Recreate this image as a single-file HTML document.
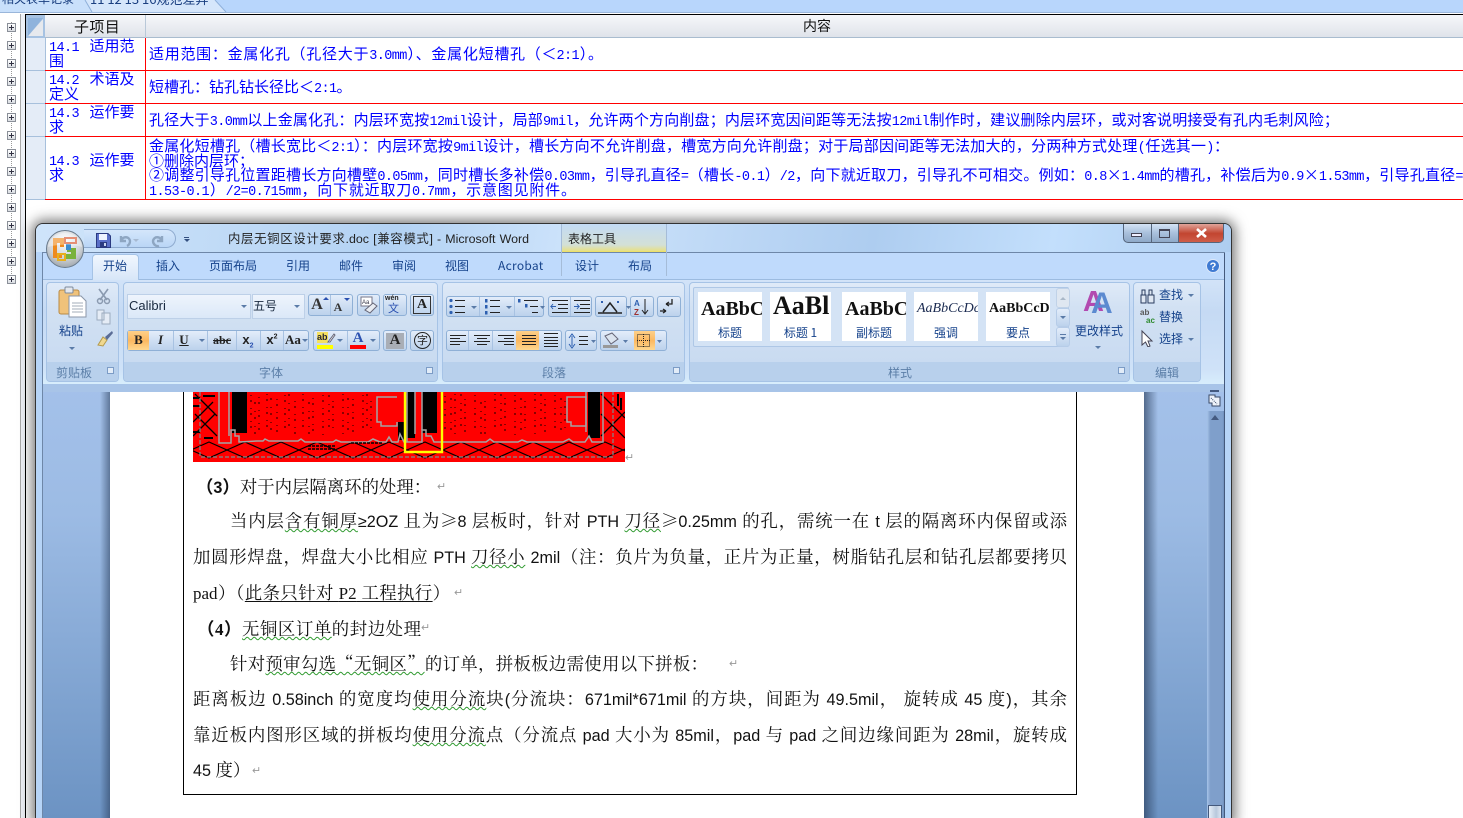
<!DOCTYPE html>
<html lang="zh-CN"><head><meta charset="utf-8"><title>内层无铜区设计要求</title>
<style>
html,body{margin:0;padding:0;background:#fff;width:1463px;height:818px;overflow:hidden}
body{font-family:"Liberation Sans","Noto Sans CJK SC",sans-serif}
#root{position:absolute;left:0;top:0;width:1463px;height:818px;overflow:hidden;background:#fff}
div,span.a,svg.a{position:absolute}
i{font-style:normal}
.tb{position:absolute;height:15px;white-space:nowrap;color:#00f;font:15px/15px "WenQuanYi Zen Hei","Noto Sans CJK SC",sans-serif;text-align:justify;text-align-last:justify}
.tb i{font:13.5px/15px "Liberation Mono",monospace;letter-spacing:-.6px}
.tb u{text-decoration:none;margin-left:3px}
.rl{position:absolute;left:45px;width:1418px;height:1px;background:#f00}
.hl{position:absolute;left:26px;width:19px;height:1px;background:#a7c0dc}
.tree{position:absolute;left:7px;width:9px;height:9px;box-sizing:border-box;border:1px solid #8a8f98;background:linear-gradient(#fff,#d9dde2)}
.tree:before{content:"";position:absolute;left:1px;top:3px;width:5px;height:1px;background:#334}
.tree:after{content:"";position:absolute;left:3px;top:1px;width:1px;height:5px;background:#334}
.rb{position:absolute;font:12px/16px "Noto Sans CJK SC",sans-serif;color:#15428b;white-space:nowrap}
.gr{position:absolute;top:282px;height:100px;box-sizing:border-box;border:1px solid #a6c3e6;border-radius:4px;background:linear-gradient(#dfeaf8 0,#d2e1f3 25%,#c9dbf1 80%);overflow:hidden}
.gr:after{content:"";position:absolute;left:0;right:0;bottom:0;height:19px;background:#b8d0ec}
.lb{position:absolute;top:364px;font:12px/17px "Noto Sans CJK SC",sans-serif;color:#5c7fa8;white-space:nowrap}
.btn{position:absolute;box-sizing:border-box;border:1px solid #8fb0d6;border-radius:3px;background:linear-gradient(#e3edfa,#cfdff3 50%,#bcd2ec)}
.on{position:absolute;background:linear-gradient(#fdd08a,#fbb860 50%,#ffd88f)}
.sep{position:absolute;width:1px;background:#a8c2e2}
.dn{position:absolute;width:0;height:0;border-left:3px solid transparent;border-right:3px solid transparent;border-top:3px solid #5a7ba8}
.sw{position:absolute;top:292px;height:49px;background:#fff;overflow:hidden}
.sw b{position:absolute;left:3px;top:4px;white-space:nowrap;font:bold 20px/26px "Liberation Serif",serif;color:#111}
.sw span{position:absolute;left:0;right:0;top:33px;text-align:center;font:12px/16px "Noto Sans CJK SC",sans-serif;color:#15428b}
.ic{position:absolute;font-family:"Liberation Serif",serif;color:#222;text-align:center;line-height:20px}
.dlg{position:absolute;width:7px;height:7px;box-sizing:border-box;border:1px solid #7c9cc6;background:#e2ecf8}
.d{position:absolute;white-space:nowrap;color:#111;font:17.4px/20px "Noto Serif CJK SC","Noto Sans CJK SC",serif;text-align:justify;text-align-last:justify}
.d b{font-family:"Noto Sans CJK SC",sans-serif;font-weight:700}
.d i{font:16.2px/20px "Liberation Sans",sans-serif}
.d em{font:17px/20px "Liberation Serif",serif;font-style:normal}
.w{text-decoration:underline wavy #2f9a2f 1px;text-underline-offset:1px}
.p{color:#999;font:11px/20px "Liberation Sans",sans-serif;position:absolute}
</style></head><body><div id="root">

<!-- top tab strip -->
<div style="left:0;top:0;width:1463px;height:12px;background:#b8d6fc"></div>
<div style="left:0;top:12px;width:1463px;height:1px;background:#9ab6da"></div>
<svg class="a" style="left:0;top:0" width="240" height="13"><path d="M0 12H92L85 0H0Z" fill="#c9e0fb"/><path d="M85 0L92 12H226L215 0Z" fill="#d5e6fb"/><path d="M85 0L92 12M215 0L226 12" stroke="#8fb0da" fill="none"/></svg>
<div style="left:2px;top:-8px;font:12px/14px 'Noto Sans CJK SC',sans-serif;color:#1a3f80;white-space:nowrap">相关表单记录</div>
<div style="left:90px;top:-8px;font:13px/14px 'Noto Sans CJK SC',sans-serif;color:#1a3f80;white-space:nowrap">11 12 13 16规范差异</div>

<!-- left panel -->
<div style="left:20px;top:14px;width:1px;height:804px;background:#a9a9a9"></div>
<div style="left:21px;top:14px;width:4px;height:804px;background:#eef1f6"></div>
<div style="left:11px;top:22px;width:0;height:258px;border-left:1px dotted #999"></div>
<div class="tree" style="top:23px"></div><div class="tree" style="top:41px"></div><div class="tree" style="top:59px"></div><div class="tree" style="top:77px"></div><div class="tree" style="top:95px"></div><div class="tree" style="top:113px"></div><div class="tree" style="top:131px"></div><div class="tree" style="top:149px"></div><div class="tree" style="top:167px"></div><div class="tree" style="top:185px"></div><div class="tree" style="top:203px"></div><div class="tree" style="top:221px"></div><div class="tree" style="top:239px"></div><div class="tree" style="top:257px"></div><div class="tree" style="top:275px"></div>

<!-- datasheet -->
<div style="left:25px;top:14px;width:1438px;height:1px;background:#000"></div>
<div style="left:25px;top:14px;width:1px;height:804px;background:#000"></div>
<div style="left:26px;top:15px;width:1437px;height:22px;background:linear-gradient(#f6f7fa,#dfe3ea)"></div>
<div style="left:26px;top:37px;width:1437px;height:1px;background:#a9bccf"></div>
<div style="left:26px;top:15px;width:19px;height:23px;background:#a6c2e2"></div>
<svg class="a" style="left:27px;top:17px" width="17" height="20"><path d="M1 19L16 2V19Z" fill="#e6e9ee"/><path d="M1 1H16L1 19Z" fill="#8fb3dc"/></svg>
<div style="left:145px;top:15px;width:1px;height:185px;background:#f00"></div>
<div style="left:145px;top:15px;width:1px;height:23px;background:#b9c8d8"></div>
<div style="left:26px;top:38px;width:19px;height:162px;background:#e4ecf7"></div>
<div style="left:45px;top:38px;width:1px;height:162px;background:#a7c0dc"></div>
<div class="hl" style="top:70px"></div><div class="hl" style="top:103px"></div><div class="hl" style="top:136px"></div><div class="hl" style="top:199px"></div>
<div class="rl" style="top:70px"></div><div class="rl" style="top:103px"></div><div class="rl" style="top:136px"></div><div class="rl" style="top:199px"></div>
<div style="left:74px;top:17px;font:15px/19px 'WenQuanYi Zen Hei','Noto Sans CJK SC',sans-serif;color:#111;letter-spacing:.4px;white-space:nowrap">子项目</div>
<div style="left:803px;top:17px;font:14px/19px 'WenQuanYi Zen Hei','Noto Sans CJK SC',sans-serif;color:#111;white-space:nowrap">内容</div>

<div class="tb" style="left:49px;top:38px"><i>14.1 </i><u>适用范</u></div><div class="tb" style="left:49px;top:53px">围</div>
<div class="tb" style="left:49px;top:71px"><i>14.2 </i><u>术语及</u></div><div class="tb" style="left:49px;top:86px">定义</div>
<div class="tb" style="left:49px;top:104px"><i>14.3 </i><u>运作要</u></div><div class="tb" style="left:49px;top:119px">求</div>
<div class="tb" style="left:49px;top:152px"><i>14.3 </i><u>运作要</u></div><div class="tb" style="left:49px;top:167px">求</div>

<div class="tb" style="left:149px;top:46px;width:454px">适用范围：金属化孔（孔径大于<i>3.0mm</i>）、金属化短槽孔（＜<i>2:1</i>）。</div>
<div class="tb" style="left:149px;top:79px;width:200px">短槽孔：钻孔钻长径比＜<i>2:1</i>。</div>
<div class="tb" style="left:149px;top:112px;width:1190px">孔径大于<i>3.0mm</i>以上金属化孔：内层环宽按<i>12mil</i>设计，局部<i>9mil</i>，允许两个方向削盘；内层环宽因间距等无法按<i>12mil</i>制作时，建议删除内层环，或对客说明接受有孔内毛刺风险；</div>
<div class="tb" style="left:149px;top:138px;width:1080px">金属化短槽孔（槽长宽比＜<i>2:1</i>）：内层环宽按<i>9mil</i>设计，槽长方向不允许削盘，槽宽方向允许削盘；对于局部因间距等无法加大的，分两种方式处理<i>(</i>任选其一<i>)</i>：</div>
<div class="tb" style="left:149px;top:153px">①删除内层环；</div>
<div class="tb" style="left:149px;top:167px;width:1314px">②调整引导孔位置距槽长方向槽壁<i>0.05mm</i>，同时槽长多补偿<i>0.03mm</i>，引导孔直径<i>=</i>（槽长<i>-0.1</i>）<i>/2</i>，向下就近取刀，引导孔不可相交。例如：<i>0.8</i>×<i>1.4mm</i>的槽孔，补偿后为<i>0.9</i>×<i>1.53mm</i>，引导孔直径<i>=</i></div>
<div class="tb" style="left:149px;top:182px;width:427px"><i>1.53-0.1</i>）<i>/2=0.715mm</i>，向下就近取刀<i>0.7mm</i>，示意图见附件。</div>

<!-- Word window -->
<div style="left:35px;top:223px;width:1197px;height:600px;border-radius:8px 8px 0 0;background:#b9d7f8;border:1px solid #333;box-sizing:border-box;box-shadow:0 0 13px 3px rgba(0,0,0,.55)"></div>
<div style="left:36px;top:224px;width:1195px;height:28px;border-radius:7px 7px 0 0;background:linear-gradient(100deg,#cfe4fa 0,#b3d2f3 30%,#cde3fb 45%,#aecdf0 70%,#c3dffc 85%,#aecdf0)"></div>
<div style="left:36px;top:252px;width:6px;height:566px;background:#b6d4f7"></div>
<div style="left:1225px;top:252px;width:6px;height:566px;background:#b6d4f7"></div>
<div style="left:1224px;top:252px;width:1px;height:566px;background:#44597c"></div>
<div style="left:42px;top:252px;width:1px;height:566px;background:#6e87a8"></div>
<div style="left:42px;top:252px;width:1183px;height:1px;background:#6e87a8"></div>

<!-- doc area -->
<div style="left:43px;top:384px;width:1181px;height:434px;background:linear-gradient(#a4c1ea,#9cbbe4 30%,#6c93c3)"></div>
<div style="left:100px;top:392px;width:10px;height:426px;background:linear-gradient(90deg,transparent,rgba(40,60,90,.55))"></div>
<div style="left:110px;top:392px;width:1034px;height:426px;background:#fff"></div>
<div style="left:1144px;top:392px;width:14px;height:426px;background:linear-gradient(90deg,rgba(40,60,90,.65),transparent)"></div>

<!-- ribbon -->
<div style="left:43px;top:253px;width:1181px;height:27px;background:#bfdafc"></div>
<div style="left:43px;top:279px;width:1181px;height:106px;background:linear-gradient(#d2e3f8,#c5daf4 30%,#cfe2f8 85%,#d8eefc);border-top:1px solid #9cbbe0;box-sizing:border-box"></div>
<div style="left:43px;top:384px;width:1181px;height:8px;background:#a8c4e8"></div>

<!-- contextual tab -->
<div style="left:561px;top:224px;width:106px;height:28px;background:linear-gradient(#c3dbf5,#d3e0d6 75%,#e6e08a 95%,#efe05a)"></div>
<div style="left:561px;top:224px;width:1px;height:52px;background:#a5bcd8"></div>
<div style="left:666px;top:224px;width:1px;height:52px;background:#a5bcd8"></div>
<div style="left:568px;top:231px;font:12px/16px 'Noto Sans CJK SC',sans-serif;color:#222;white-space:nowrap">表格工具</div>
<div style="left:228px;top:231px;font:12.4px/16px 'Liberation Sans','Noto Sans CJK SC',sans-serif;color:#222;white-space:nowrap;width:301px;text-align:justify;text-align-last:justify">内层无铜区设计要求.doc [兼容模式] - Microsoft Word</div>

<!-- QAT -->
<div style="left:84px;top:229px;width:92px;height:19px;box-sizing:border-box;border:1px solid #8fabcf;border-left:none;border-radius:0 10px 10px 0;background:linear-gradient(#d4e6fb,#bad6f6)"></div>
<svg class="a" style="left:96px;top:233px" width="15" height="15"><path d="M.5.5H12L14.5 3V14.5H.5Z" fill="#5a6fc8" stroke="#2b3a80"/><rect x="3" y="1" width="8" height="6" fill="#eef3ff"/><rect x="4" y="9" width="7" height="5" fill="#2b3a80"/><rect x="8" y="10" width="2" height="3" fill="#c9d4ef"/></svg>
<svg class="a" style="left:118px;top:233px" width="52" height="15"><path d="M3 3V8H8M3 8C5 3 11 3 12 8C12 10 11 12 9 13" fill="none" stroke="#8ea6c2" stroke-width="2.4"/><path d="M15 6L21 6L18 9Z" fill="#a7bad2"/><path d="M44 3V8H39M44 8C42 3 36 3 35 8C35 11 38 14 41 13" fill="none" stroke="#8ea6c2" stroke-width="2.4"/></svg>
<div style="left:184px;top:237px;width:5px;height:1px;background:#334f80"></div><div class="dn" style="left:184px;top:239px;border-top-color:#334f80"></div>

<!-- Office orb -->
<svg class="a" style="left:45px;top:229px" width="40" height="40"><defs><radialGradient id="o" cx=".5" cy=".3" r=".8"><stop offset="0" stop-color="#fbfcfd"/><stop offset=".55" stop-color="#d0d4d8"/><stop offset="1" stop-color="#8f979e"/></radialGradient></defs><circle cx="20" cy="20" r="18.5" fill="url(#o)" stroke="#6a7b8c"/><path d="M8 9H19V18H15V14H12V25H17V29H8Z" fill="#ee8a1e"/><path d="M20 9H31V14H20Z" fill="none" stroke="#d8542c" stroke-width="2"/><path d="M22 19H31V30H20V25H26V23H22Z" fill="#7ab23a"/><path d="M13 25H20V31H13Z" fill="none" stroke="#e8b01c" stroke-width="2"/><rect x="21" y="15" width="5" height="6" fill="#3a8cd0"/><path d="M3 18A17 14 0 0 1 37 18C28 15 12 15 3 18Z" fill="#fff" opacity=".35"/></svg>

<!-- window buttons -->
<div style="left:1123px;top:224px;width:101px;height:19px;box-sizing:border-box;border:1px solid #55657c;border-top:none;border-radius:0 0 5px 5px;background:linear-gradient(#d4e3f5,#a9c0dc 50%,#8ea9c8);overflow:hidden">
<div style="left:54px;top:0;width:47px;height:19px;background:linear-gradient(#e0a49a,#c24530 50%,#d0604c)"></div>
<div style="left:27px;top:0;width:1px;height:19px;background:#55657c"></div><div style="left:54px;top:0;width:1px;height:19px;background:#55657c"></div></div>
<div style="left:1131px;top:233px;width:11px;height:4px;box-sizing:border-box;border:1px solid #445;background:#eef"></div>
<div style="left:1159px;top:229px;width:11px;height:9px;box-sizing:border-box;border:1px solid #445;border-top-width:2px"></div>
<svg class="a" style="left:1196px;top:228px" width="11" height="10"><path d="M1 1L10 9M10 1L1 9" stroke="#fff" stroke-width="2.6"/></svg>

<!-- tabs -->
<div style="left:92px;top:254px;width:47px;height:26px;box-sizing:border-box;border:1px solid #a5c3e6;border-bottom:none;border-radius:4px 4px 0 0;background:linear-gradient(#f1f7fe,#d7e6f8)"></div>
<div class="rb" style="left:103px;top:258px">开始</div><div class="rb" style="left:156px;top:258px">插入</div><div class="rb" style="left:209px;top:258px">页面布局</div><div class="rb" style="left:286px;top:258px">引用</div><div class="rb" style="left:339px;top:258px">邮件</div><div class="rb" style="left:392px;top:258px">审阅</div><div class="rb" style="left:445px;top:258px">视图</div><div class="rb" style="left:498px;top:258px;letter-spacing:.3px">Acrobat</div><div class="rb" style="left:575px;top:258px">设计</div><div class="rb" style="left:628px;top:258px">布局</div>
<svg class="a" style="left:1206px;top:259px" width="14" height="14"><circle cx="7" cy="7" r="6.5" fill="#3f7ad2" stroke="#dde8f8"/><text x="7" y="11" font-family="Liberation Sans" font-weight="bold" font-size="11" fill="#fff" text-anchor="middle">?</text></svg>

<!-- groups -->
<div class="gr" style="left:46px;width:73px"></div><div class="gr" style="left:123px;width:315px"></div><div class="gr" style="left:442px;width:243px"></div><div class="gr" style="left:689px;width:441px"></div><div class="gr" style="left:1133px;width:68px"></div>
<div class="lb" style="left:56px">剪贴板</div><div class="lb" style="left:259px">字体</div><div class="lb" style="left:542px">段落</div><div class="lb" style="left:888px">样式</div><div class="lb" style="left:1155px">编辑</div>
<div class="dlg" style="left:107px;top:367px"></div><div class="dlg" style="left:426px;top:367px"></div><div class="dlg" style="left:673px;top:367px"></div><div class="dlg" style="left:1118px;top:367px"></div>

<!-- clipboard -->
<svg class="a" style="left:58px;top:286px" width="30" height="32"><rect x="1" y="4" width="20" height="24" rx="2" fill="#f0c27a" stroke="#b88a44"/><rect x="7" y="1" width="8" height="6" rx="1" fill="#e4e8ee" stroke="#7d8a9c"/><path d="M11 10H23L28 15V31H11Z" fill="#fff" stroke="#8a96a8"/><path d="M14 17H25M14 20H25M14 23H25M14 26H25" stroke="#a3acb8"/></svg>
<div class="rb" style="left:59px;top:323px">粘贴</div><div class="dn" style="left:69px;top:347px"></div>
<svg class="a" style="left:96px;top:287px" width="18" height="60"><path d="M3 2L11 13M12 2L4 13" stroke="#8a9ab0" stroke-width="1.6"/><circle cx="4" cy="14" r="2.5" fill="none" stroke="#8a9ab0" stroke-width="1.5"/><circle cx="11" cy="14" r="2.5" fill="none" stroke="#8a9ab0" stroke-width="1.5"/><path d="M1 23H8V33H1ZM6 26H14V37H6Z" fill="#e5ecf6" stroke="#9cabbf"/><path d="M2 58L7 50L11 53L7 59Z" fill="#f0d890" stroke="#b49a4c"/><path d="M9 50L16 44L17 46L11 53Z" fill="#5a6c96"/></svg>

<!-- font group -->
<div style="left:127px;top:294px;width:124px;height:25px;background:linear-gradient(#eef4fc,#dbe8f8);border:1px solid #bdd0e8;box-sizing:border-box"></div>
<div style="left:252px;top:294px;width:53px;height:25px;background:linear-gradient(#eef4fc,#dbe8f8);border:1px solid #bdd0e8;box-sizing:border-box"></div>
<div style="left:129px;top:298px;font:13px/16px 'Liberation Sans',sans-serif;color:#1a2a40">Calibri</div>
<div style="left:253px;top:298px;font:12px/16px 'Noto Sans CJK SC',sans-serif;color:#1a2a40">五号</div>
<div class="dn" style="left:241px;top:305px"></div><div class="dn" style="left:294px;top:305px"></div>

<div class="btn" style="left:308px;top:294px;width:45px;height:22px"></div><div class="sep" style="left:330px;top:295px;height:20px"></div>
<div class="ic" style="left:309px;top:295px;width:16px;font-size:16px;font-weight:bold;color:#333">A</div><div class="ic" style="left:332px;top:297px;width:12px;font-size:12px;font-weight:bold;color:#333">A</div>
<div class="dn" style="left:323px;top:297px;border-top:none;border-bottom:3px solid #2a50b0"></div><div class="dn" style="left:344px;top:298px;border-top-color:#2a50b0"></div>
<div class="btn" style="left:357px;top:294px;width:23px;height:22px"></div>
<svg class="a" style="left:360px;top:296px" width="18" height="18"><rect x="1" y="1" width="11" height="9" fill="#fff" stroke="#778"/><text x="2" y="8" font-size="6" font-family="Liberation Sans" fill="#334">Aa</text><path d="M5 14L13 7L17 10L10 17Z" fill="#e8ecf2" stroke="#667"/></svg>
<div class="btn" style="left:383px;top:294px;width:24px;height:22px"></div>
<div style="left:385px;top:294px;font:bold 7px/10px 'Liberation Sans',sans-serif;color:#222">wén</div><div style="left:388px;top:302px;font:11px/13px 'Noto Sans CJK SC',sans-serif;color:#2a50b0">文</div>
<div class="btn" style="left:410px;top:294px;width:24px;height:22px"></div>
<div class="ic" style="left:413px;top:296px;width:18px;height:18px;box-sizing:border-box;border:1px solid #333;font:bold 14px/16px 'Liberation Serif',serif">A</div>

<div class="btn" style="left:127px;top:330px;width:182px;height:21px"></div>
<div class="on" style="left:128px;top:331px;width:21px;height:19px"></div>
<div class="sep" style="left:173px;top:331px;height:19px"></div><div class="sep" style="left:207px;top:331px;height:19px"></div><div class="sep" style="left:236px;top:331px;height:19px"></div><div class="sep" style="left:260px;top:331px;height:19px"></div><div class="sep" style="left:283px;top:331px;height:19px"></div>
<div class="ic" style="left:128px;top:330px;width:21px;font-size:13px;font-weight:bold">B</div>
<div class="ic" style="left:150px;top:330px;width:21px;font-size:13px;font-style:italic;font-weight:bold">I</div>
<div class="ic" style="left:175px;top:330px;width:18px;font-size:13px;font-weight:bold;text-decoration:underline">U</div><div class="dn" style="left:199px;top:339px"></div>
<div class="ic" style="left:209px;top:330px;width:26px;font-size:12px;font-weight:bold;text-decoration:line-through">abc</div>
<div class="ic" style="left:237px;top:330px;width:22px;font-size:13px;font-weight:bold;font-family:'Liberation Sans',sans-serif">x<sub style="font-size:7px;color:#2a50b0">2</sub></div>
<div class="ic" style="left:261px;top:330px;width:22px;font-size:13px;font-weight:bold;font-family:'Liberation Sans',sans-serif">x<sup style="font-size:7px;line-height:0">2</sup></div>
<div class="ic" style="left:284px;top:330px;width:18px;font-size:13px;font-weight:bold">Aa</div><div class="dn" style="left:302px;top:339px"></div>

<div class="btn" style="left:313px;top:330px;width:67px;height:21px"></div><div class="sep" style="left:347px;top:331px;height:19px"></div>
<div style="left:317px;top:332px;width:11px;height:11px;background:#f4e060;font:bold 9px/10px 'Liberation Sans',sans-serif;color:#223">ab</div><svg class="a" style="left:327px;top:333px" width="9" height="10"><path d="M1 9L7 1L8 2L3 9Z" fill="#fff" stroke="#667"/></svg>
<div style="left:317px;top:345px;width:16px;height:4px;background:#ff0"></div><div class="dn" style="left:337px;top:339px"></div>
<div class="ic" style="left:350px;top:330px;width:16px;font-size:15px;line-height:17px;color:#2a50b0;font-weight:bold">A</div><div style="left:350px;top:345px;width:16px;height:4px;background:#f00"></div><div class="dn" style="left:370px;top:339px"></div>
<div class="btn" style="left:383px;top:330px;width:24px;height:21px"></div><div style="left:386px;top:333px;width:18px;height:16px;background:#a9aeb6"></div>
<div class="ic" style="left:386px;top:330px;width:18px;font:bold 15px/21px 'Liberation Serif',serif;color:#222">A</div>
<div class="btn" style="left:410px;top:330px;width:24px;height:21px"></div>
<div style="left:414px;top:332px;width:17px;height:17px;box-sizing:border-box;border:1.5px solid #222;border-radius:50%;font:11px/14px 'Noto Sans CJK SC',sans-serif;text-align:center;color:#222">字</div>

<!-- paragraph -->
<div class="btn" style="left:446px;top:296px;width:98px;height:21px"></div><div class="sep" style="left:479px;top:297px;height:19px"></div><div class="sep" style="left:514px;top:297px;height:19px"></div>
<div class="btn" style="left:548px;top:296px;width:44px;height:21px"></div><div class="sep" style="left:570px;top:297px;height:19px"></div>
<div class="btn" style="left:595px;top:296px;width:32px;height:21px"></div>
<div class="btn" style="left:630px;top:296px;width:24px;height:21px"></div>
<div class="btn" style="left:657px;top:296px;width:24px;height:21px"></div>
<svg class="a" style="left:448px;top:297px" width="232" height="20" fill="none" stroke="#222"><path d="M7 3.500H17M7 9.500H17M7 15.500H17M42 3.500H52M42 9.500H52M42 15.500H52M76 3.500H90M82 9.500H90M84 15.500H90"/><g fill="#2d5fb0" stroke="none"><circle cx="3" cy="3.500" r="1.600"/><circle cx="3" cy="9.500" r="1.600"/><circle cx="3" cy="15.500" r="1.600"/><rect x="37" y="2" width="2.500" height="3.500"/><rect x="37" y="8" width="2.500" height="3.500"/><rect x="37" y="14" width="2.500" height="3.500"/><rect x="70" y="2" width="2.500" height="3.500"/><rect x="77" y="7" width="2.500" height="3.500"/><path d="M23 9l6 0-3 3zM58 9l6 0-3 3zM92 9l5 0-2.500 3z" fill="#5a7ba8"/></g><path d="M104 3.500H120M110 7.500H120M110 11.500H120M104 15.500H120M126 3.500H142M132 7.500H142M132 11.500H142M126 15.500H142"/><path d="M108 9.500H103L105 7M103 9.500L105 12M126 9.500H131L129 7M131 9.500L129 12" stroke="#2d5fb0"/><path d="M155 15L162 6L169 15M150 16H174" stroke-width="1.500"/><path d="M155 5H153M171 5H169" stroke="#2d5fb0" stroke-width="2"/><path d="M178 9l5 0-2.500 3z" fill="#5a7ba8" stroke="none"/><text x="186" y="9" font-size="8" font-weight="bold" font-family="Liberation Sans" fill="#2d5fb0" stroke="none">A</text><text x="186" y="18" font-size="8" font-weight="bold" font-family="Liberation Sans" fill="#9c3030" stroke="none">Z</text><path d="M197 2V16M194 13L197 17L200 13"/><path d="M224 2V7H218M218 7L221 5M218 7L221 9M212 14H218M218 14L215 12M218 14L215 16" stroke-width="1.300"/></svg>

<div class="btn" style="left:446px;top:330px;width:116px;height:21px"></div>
<div class="on" style="left:516px;top:331px;width:23px;height:19px"></div>
<div class="sep" style="left:468px;top:331px;height:19px"></div><div class="sep" style="left:492px;top:331px;height:19px"></div>
<div class="btn" style="left:565px;top:330px;width:32px;height:21px"></div>
<div class="btn" style="left:600px;top:330px;width:67px;height:21px"></div>
<div class="on" style="left:634px;top:331px;width:21px;height:19px"></div>
<svg class="a" style="left:448px;top:332px" width="220" height="18" fill="none" stroke="#222"><path d="M2 3.500H18M2 6.500H12M2 9.500H18M2 12.500H12M26 3.500H42M29 6.500H39M26 9.500H42M29 12.500H39M50 3.500H66M56 6.500H66M50 9.500H66M56 12.500H66M74 3.500H88M74 6.500H88M74 9.500H88M74 12.500H88M96 5.500H110M96 8.500H110M96 11.500H110M96 14.500H110M96 1.500H110"/><path d="M124 4V14M121 6L124 2L127 6M121 12L124 16L127 12" stroke="#2d5fb0"/><path d="M131 4.500H140M131 8.500H140M131 12.500H140"/><path d="M143 8l5 0-2.500 3z" fill="#5a7ba8" stroke="none"/><path d="M157 4L164 1L170 7L163 12Z" fill="#dbe4ef" stroke="#667"/><path d="M155 14.500H170" stroke="#999" stroke-width="3"/><path d="M175 8l5 0-2.500 3zM209 8l5 0-2.500 3z" fill="#5a7ba8" stroke="none"/><rect x="189.500" y="2.500" width="12" height="12" stroke-dasharray="1 1"/><path d="M195.500 2V15M189 8.500H202" stroke-dasharray="1 1"/></svg>

<!-- styles -->
<div style="left:693px;top:287px;width:376px;height:60px;box-sizing:border-box;border:1px solid #aec7e6;background:#d4e3f5;border-radius:2px"></div>
<div class="sw" style="left:698px;width:64px"><b>AaBbC</b><span>标题</span></div>
<div class="sw" style="left:770px;width:61px"><b style="font-size:26px;top:1px">AaBl</b><span>标题 1</span></div>
<div class="sw" style="left:842px;width:64px"><b>AaBbC</b><span>副标题</span></div>
<div class="sw" style="left:914px;width:64px"><b style="font:italic 14px/26px 'Liberation Serif',serif;color:#1a2a50">AaBbCcDc</b><span>强调</span></div>
<div class="sw" style="left:986px;width:64px"><b style="font-size:14px">AaBbCcD</b><span>要点</span></div>
<div class="btn" style="left:1056px;top:288px;width:14px;height:20px;background:#dfe7f1;border-color:#c0d2e8"></div>
<div class="btn" style="left:1056px;top:308px;width:14px;height:19px;border-color:#b6cce8"></div>
<div class="btn" style="left:1056px;top:327px;width:14px;height:20px;border-color:#b6cce8"></div>
<div class="dn" style="left:1060px;top:297px;border-top:none;border-bottom:3px solid #aab8c8"></div><div class="dn" style="left:1060px;top:316px"></div><div class="dn" style="left:1060px;top:337px"></div><div style="left:1060px;top:334px;width:6px;height:1px;background:#5a7ba8"></div>
<div style="left:1083px;top:285px;font:bold 29px/34px 'Liberation Sans',sans-serif;color:#b24ab0">A</div>
<div style="left:1091px;top:287px;font:bold 30px/34px 'Liberation Sans',sans-serif;color:#5b8ad0">A</div>
<div class="rb" style="left:1075px;top:323px">更改样式</div><div class="dn" style="left:1095px;top:346px"></div>

<!-- editing -->
<svg class="a" style="left:1139px;top:287px" width="19" height="60" fill="none"><path d="M2 8H7V16H2ZM9 8H15V16H9ZM3 3H6V8H3ZM10 3H13V8H10Z" fill="#dfe7f2" stroke="#2a3c60"/><text x="1" y="28" font-size="8" font-weight="bold" font-family="Liberation Sans" fill="#555">ab</text><text x="7" y="36" font-size="8" font-weight="bold" font-family="Liberation Sans" fill="#2e8a2e">ac</text><path d="M3 44V58L6.500 55L9 60L11 59L9 54H13Z" fill="#fff" stroke="#445"/></svg>
<div class="rb" style="left:1159px;top:287px">查找</div><div class="rb" style="left:1159px;top:309px">替换</div><div class="rb" style="left:1159px;top:331px">选择</div>
<div class="dn" style="left:1188px;top:294px"></div><div class="dn" style="left:1188px;top:338px"></div>

<!-- scrollbar -->
<div style="left:1207px;top:411px;width:17px;height:407px;background:linear-gradient(90deg,#a6c3e8,#7f9fcb 20%,#7f9fcb 90%,#6f90bc)"></div>
<div style="left:1210px;top:390px;width:9px;height:2px;background:#445a80"></div>
<svg class="a" style="left:1208px;top:394px" width="14" height="14"><path d="M1 1H7V3H12V12H4V9H1Z" fill="#eef3fa" stroke="#3a4a66"/><path d="M3 4L9 10" stroke="#3a4a66" stroke-dasharray="1 1"/></svg>
<div style="left:1211px;top:415px;width:0;height:0;border-left:4px solid transparent;border-right:4px solid transparent;border-bottom:5px solid #445a80"></div>
<div style="left:1208px;top:805px;width:14px;height:13px;box-sizing:border-box;border:1px solid #44597c;border-bottom:none;background:linear-gradient(90deg,#e6eef8,#b8c8dc 60%,#dce6f2)"></div>

<!-- pcb -->
<svg class="a" style="left:193px;top:392px" width="432" height="70" viewBox="0 0 432 70">
<rect width="432" height="70" fill="#f00"/>
<g stroke="#000" fill="none">
<path d="M-20 50L16 66L52 50L88 66L124 50L160 66L196 50L232 66L268 50L304 66L340 50L376 66L412 50L448 66" stroke-width="1.200"/>
<path d="M-20 66L16 50L52 66L88 50L124 66L160 50L196 66L232 50L268 66L304 50L340 66L376 50L412 66L448 50" stroke-width="1.200"/>
<path d="M2 2L24 24M2 22L24 44M0 30L20 10M0 44L22 22M408 44L432 20M408 2L432 26M408 22L432 46" stroke-width="1.300"/>
<path d="M0 6H7M0 14H7M0 40H7M425 2V14M428 6V18M10 4H22M11 46H20" stroke-width="2"/>
<path d="M58 3V40M66 5V44M74 2V38M84 7V42M92 3V36M102 9V44M110 2V40M120 6V42M130 3V44M140 9V40M150 2V44M160 7V42M170 3V40M178 9V36M252 4V42M262 2V44M272 7V40M282 3V42M292 9V44M302 2V38M312 6V42M322 3V44M332 9V40M342 2V42M352 7V44M362 3V38M372 9V40" stroke-width=".9" stroke-dasharray="1 4 2 6"/>
<path d="M62 10V42M78 6V44M96 2V34M116 10V44M136 3V38M155 6V42M174 2V36M258 6V44M268 2V38M288 10V44M308 2V36M328 6V44M348 2V40M368 6V40" stroke-width=".9" stroke-dasharray="2 7 1 5"/>
</g>
<rect x="39" y="0" width="15" height="41" fill="#000"/><rect x="229" y="0" width="15" height="41" fill="#000"/><rect x="395" y="0" width="12" height="46" fill="#000"/><rect x="214" y="0" width="8" height="46" fill="#000"/><rect x="205" y="30" width="7" height="18" fill="#000"/>
<g fill="none" stroke="#a4a4a4" stroke-width="1.500">
<path d="M26 0V51H38V38H42V44H46V50L64 49H70L72 47L76 49H105L108 47L112 50H140L143 48L148 50H175L180 47L187 50H193L196 45L199 50H205L207 42L211 50H229V38H233V44H238L241 50H293L297 47L301 50H325L329 48L334 50H370L376 47L380 50H392L396 44L399 50H410V0"/>
<path d="M214 0V50M36 0V44M222 0V42M229 0V38M393 0V40"/>
<path d="M204 30V34H188V30H184V5H204M378 5H393V34H378V30H374V5H378"/>
</g>
<path d="M7 0V65H420V0" fill="none" stroke="#7d8d8d" stroke-width="1.200" stroke-dasharray="4 2"/>
<path d="M212 0V60H249V0" fill="none" stroke="#ff0" stroke-width="2.400"/>
<path d="M115 54H143M115 57H143M158 51H190" stroke="#000" stroke-width="1.500" stroke-dasharray="3 1"/>
</svg>
<div class="p" style="left:625px;top:448px">↵</div>

<!-- document text -->
<div style="left:183px;top:392px;width:1px;height:403px;background:#000"></div>
<div style="left:1076px;top:392px;width:1px;height:403px;background:#000"></div>
<div style="left:183px;top:794px;width:894px;height:1px;background:#000"></div>

<div class="d" style="left:196px;top:476px;width:234px"><b>（<i style="font-weight:bold">3</i>）</b>对于内层隔离环的处理：</div><div class="p" style="left:437px;top:477px">↵</div>
<div class="d" style="left:230px;top:510px;width:837px">当内层<span class="w">含有铜厚</span><i>≥2OZ</i> 且为≥<i>8</i> 层板时，针对 <i>PTH</i> <span class="w">刀径</span>≥<i>0.25mm</i> 的孔，需统一在 <i>t</i> 层的隔离环内保留或添</div>
<div class="d" style="left:193px;top:546px;width:874px">加圆形焊盘，焊盘大小比相应 <i>PTH</i> <span class="w">刀径小</span> <i>2mil</i>（注：负片为负量，正片为正量，树脂钻孔层和钻孔层都要拷贝</div>
<div class="d" style="left:193px;top:582px;width:257px"><em>pad</em>）（<span style="text-decoration:underline;text-underline-offset:2px">此条只针对 <em>P2</em> 工程执行</span>）</div><div class="p" style="left:454px;top:583px">↵</div>
<div class="d" style="left:197px;top:618px;width:224px"><b>（<em style="font-weight:bold">4</em>）</b><span class="w">无铜区订单</span>的封边处理</div><div class="p" style="left:421px;top:618px">↵</div>
<div class="d" style="left:230px;top:653px;width:478px">针对<span class="w">预审勾选“无铜区”</span>的订单，拼板板边需使用以下拼板：</div><div class="p" style="left:729px;top:654px">↵</div>
<div class="d" style="left:193px;top:688px;width:874px">距离板边 <i>0.58inch</i> 的宽度均<span class="w">使用分流</span>块<i>(</i>分流块：<i>671mil*671mil</i> 的方块，间距为 <i>49.5mil</i>， 旋转成 <i>45</i> 度<i>)</i>，其余</div>
<div class="d" style="left:193px;top:724px;width:874px">靠近板内图形区域的拼板均<span class="w">使用分流</span>点（分流点 <i>pad</i> 大小为 <i>85mil</i>，<i>pad</i> 与 <i>pad</i> 之间边缘间距为 <i>28mil</i>，旋转成</div>
<div class="d" style="left:193px;top:759px;width:54px"><i>45</i> 度）</div><div class="p" style="left:252px;top:761px">↵</div>
</div></body></html>
